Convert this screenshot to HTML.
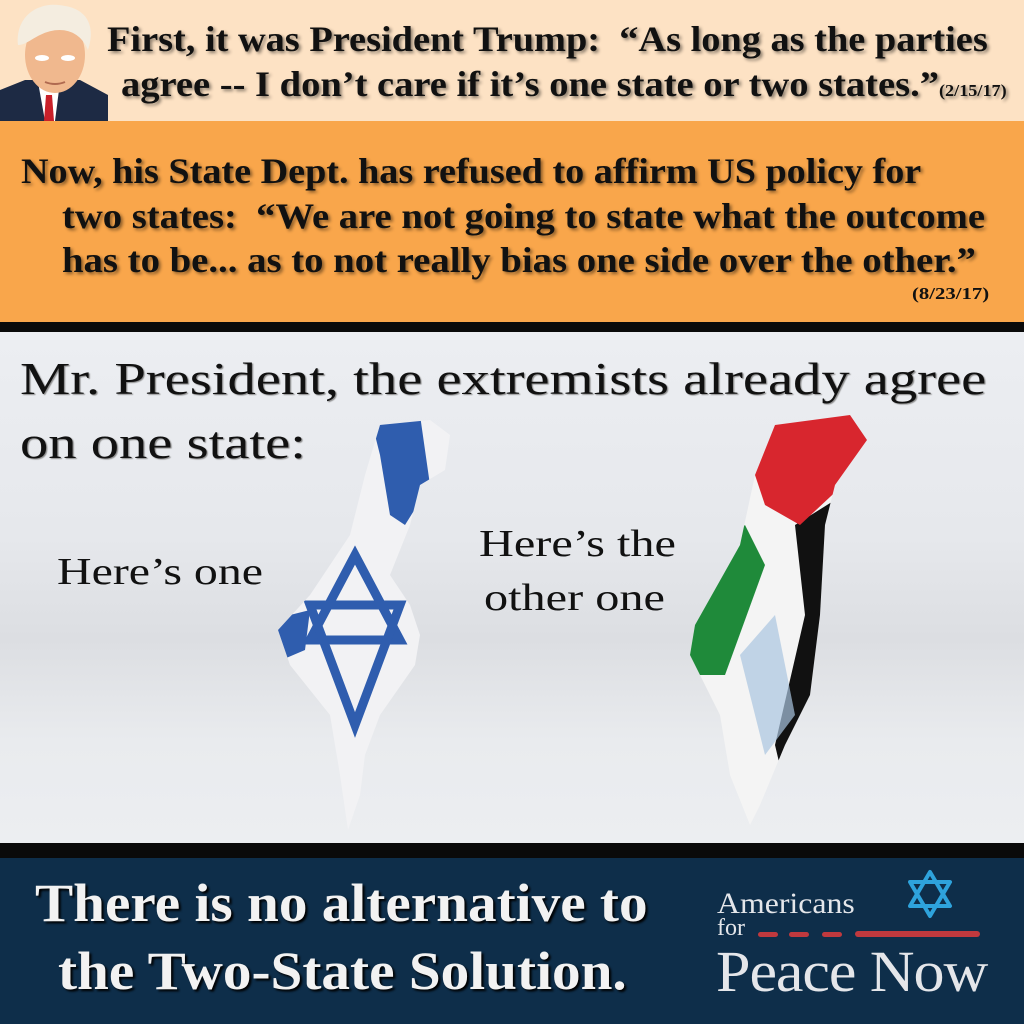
<!DOCTYPE html>
<html><head><meta charset="utf-8"><style>
*{margin:0;padding:0}
body{width:1024px;height:1024px;overflow:hidden;position:relative;font-family:"Liberation Serif",serif;background:#e9ebef}
.t{position:absolute;white-space:nowrap;color:#111;font-weight:bold;transform-origin:0 0}
.sh{text-shadow:2px 2px 3px rgba(0,0,0,.45)}
</style></head><body>
<div style="position:absolute;left:0;top:0;width:1024px;height:121px;background:#fde2c4"></div>
<div style="position:absolute;left:0;top:121px;width:1024px;height:201px;background:#f9a64b"></div>
<div style="position:absolute;left:0;top:322px;width:1024px;height:10px;background:#0a0a0a"></div>
<div style="position:absolute;left:0;top:332px;width:1024px;height:511px;background:linear-gradient(#eceef2 0%,#e6e8ec 40%,#dcdee2 60%,#e9ebee 80%,#eceef1 100%)"></div>
<div style="position:absolute;left:0;top:843px;width:1024px;height:15px;background:#0a0a0a"></div>
<div style="position:absolute;left:0;top:858px;width:1024px;height:166px;background:#0e2e4a"></div>

<svg style="position:absolute;left:0;top:0" width="110" height="121" viewBox="0 0 110 121">
<path d="M0 90 L25 80 L80 80 L108 95 L108 121 L0 121Z" fill="#1d2a44"/>
<path d="M38 82 L60 82 L55 121 L45 121Z" fill="#fff"/>
<path d="M46 95 L52 95 L54 121 L44 121Z" fill="#c8202a"/>
<ellipse cx="55" cy="55" rx="30" ry="38" fill="#f0b88e"/>
<path d="M18 45 C15 15 40 0 65 6 C90 10 95 30 88 50 C80 30 60 25 40 35 C30 40 25 45 18 45Z" fill="#f4ede0"/>
<ellipse cx="42" cy="58" rx="7" ry="3" fill="#fff"/><ellipse cx="68" cy="58" rx="7" ry="3" fill="#fff"/>
<path d="M45 82 Q55 86 65 82" stroke="#b06a50" stroke-width="2" fill="none"/>
</svg>

<div class="t sh" style="left:107px;top:18px;font-size:36px;transform:scaleX(1.065)">First, it was President Trump:&nbsp; “As long as the parties</div>
<div class="t sh" style="left:121px;top:63px;font-size:36px;transform:scaleX(1.07)">agree -- I don’t care if it’s one state or two states.”<span style="font-size:17px">(2/15/17)</span></div>

<div class="t sh" style="left:21px;top:150px;font-size:36px;transform:scaleX(1.06)">Now, his State Dept. has refused to affirm US policy for</div>
<div class="t sh" style="left:62px;top:195px;font-size:36px;transform:scaleX(1.073)">two states:&nbsp; “We are not going to state what the outcome</div>
<div class="t sh" style="left:62px;top:239px;font-size:36px;transform:scaleX(1.076)">has to be... as to not really bias one side over the other.”</div>
<div class="t" style="left:912px;top:284px;font-size:17px;transform:scaleX(1.22)">(8/23/17)</div>

<div class="t" style="left:20px;top:352px;font-size:46px;font-weight:normal;transform:scaleX(1.23);text-shadow:1px 1px 1px #888">Mr. President, the extremists already agree</div>
<div class="t" style="left:20px;top:416px;font-size:46px;font-weight:normal;transform:scaleX(1.23);text-shadow:1px 1px 1px #888">on one state:</div>
<div class="t" style="left:57px;top:550px;font-size:38px;font-weight:normal;transform:scaleX(1.26)">Here’s one</div>
<div class="t" style="left:479px;top:522px;font-size:38px;font-weight:normal;transform:scaleX(1.27)">Here’s the</div>
<div class="t" style="left:484px;top:576px;font-size:38px;font-weight:normal;transform:scaleX(1.27)">other one</div>

<svg style="position:absolute;left:270px;top:415px" width="200" height="420" viewBox="0 0 200 420">
<defs><clipPath id="il"><path d="M110 10 L160 5 L180 20 L175 55 L150 70 L140 110 L120 160 L140 190 L150 220 L145 250 L110 300 L95 340 L90 380 L78 415 L70 360 L60 300 L20 250 L8 215 L40 180 L80 120 L95 60 Z"/></clipPath></defs>
<g clip-path="url(#il)">
<rect width="200" height="420" fill="#f2f2f4"/>
<path d="M100 0 L150 0 L160 70 L135 110 L120 100 L110 40Z" fill="#2f5dae"/>
<path d="M0 205 L40 195 L35 235 L0 250Z" fill="#2f5dae"/>
<path d="M150 180 L200 170 L200 220 L150 230Z" fill="#2f5dae"/>
<g fill="none" stroke="#2f5dae" stroke-width="9"><path d="M85 140 L130 225 L40 225Z"/><path d="M85 310 L130 190 L40 190Z"/></g>
</g></svg>

<svg style="position:absolute;left:685px;top:415px" width="190" height="415" viewBox="0 0 190 415">
<defs><clipPath id="ps"><path d="M90 10 L165 0 L182 25 L150 70 L140 110 L135 200 L125 280 L100 330 L75 390 L65 410 L45 360 L35 300 L5 240 L10 210 L55 130 L70 60 Z"/></clipPath></defs>
<g clip-path="url(#ps)">
<rect width="190" height="415" fill="#f4f4f4"/>
<path d="M0 160 L60 110 L80 150 L40 260 L0 260Z" fill="#1f8a3a"/>
<path d="M110 110 L190 60 L190 415 L110 415 L90 330 L120 200Z" fill="#111"/>
<path d="M55 0 L190 0 L190 40 L115 110 L80 90 L70 60Z" fill="#d8262e"/>
<path d="M55 240 L90 200 L110 300 L80 340Z" fill="#a9c4e0" opacity=".7"/>
</g></svg>

<div class="t" style="left:35px;top:872px;font-size:54px;color:#f2f2f2;transform:scaleX(1.06);text-shadow:2px 2px 2px #000">There is no alternative to</div>
<div class="t" style="left:58px;top:940px;font-size:54px;color:#f2f2f2;transform:scaleX(1.06);text-shadow:2px 2px 2px #000">the Two-State Solution.</div>

<div class="t" style="left:717px;top:887px;font-size:30px;font-weight:normal;color:#e4e6ea;transform:scaleX(1.06)">Americans</div>
<div class="t" style="left:717px;top:915px;font-size:24px;font-weight:normal;color:#e4e6ea">for</div>
<div style="position:absolute;left:758px;top:932px;width:20px;height:5px;background:#c0393e;border-radius:3px"></div>
<div style="position:absolute;left:789px;top:932px;width:20px;height:5px;background:#c0393e;border-radius:3px"></div>
<div style="position:absolute;left:822px;top:932px;width:20px;height:5px;background:#c0393e;border-radius:3px"></div>
<div style="position:absolute;left:855px;top:931px;width:125px;height:6px;background:#c0393e;border-radius:3px"></div>
<svg style="position:absolute;left:905px;top:868px" width="50" height="52" viewBox="0 0 50 52"><g fill="none" stroke="#2ea3dc" stroke-width="4" stroke-linejoin="round"><path d="M25 4 L45 38 L5 38Z"/><path d="M25 48 L45 14 L5 14Z"/></g></svg>
<div class="t" style="left:716px;top:938px;font-size:58px;font-weight:normal;color:#e4e6ea;letter-spacing:-1px;transform:scaleX(1.07)">Peace Now</div>
</body></html>
